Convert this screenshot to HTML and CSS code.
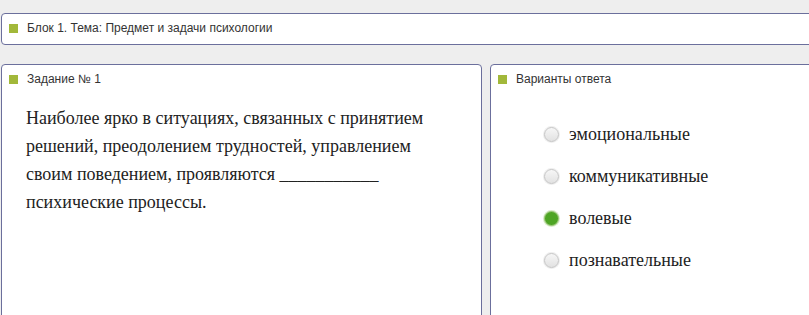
FILE: index.html
```html
<!DOCTYPE html>
<html lang="ru">
<head>
    <meta charset="UTF-8">
    <title>Тест</title>
    <link rel="stylesheet" href="styles.css">
</head>
<body>
<div class="page">
    <div class="box topic">
        <div class="box-title"><span class="marker"></span>Блок 1. Тема: Предмет и задачи психологии</div>
    </div>

    <div class="row">
        <div class="box task">
            <div class="box-title"><span class="marker"></span>Задание № 1</div>
            <p class="question">Наиболее ярко в ситуациях, связанных с принятием решений, преодолением трудностей, управлением своим поведением, проявляются ___________ психические процессы.</p>
        </div>

        <div class="box answers">
            <div class="box-title"><span class="marker"></span>Варианты ответа</div>
            <ul class="options">
                <li><span class="radio"></span>эмоциональные</li>
                <li><span class="radio"></span>коммуникативные</li>
                <li><span class="radio checked"></span>волевые</li>
                <li><span class="radio"></span>познавательные</li>
            </ul>
        </div>
    </div>
</div>
</body>
</html>
```

FILE: styles.css
```css
html, body {
    margin: 0;
    padding: 0;
    height: 100%;
    overflow: hidden;
}

body {
    background-color: #eeeeee;
    font-family: "Liberation Sans", Arial, sans-serif;
    color: #333;
}

.page {
    width: 860px;
    padding: 13px 0 0 1px;
}

.box {
    background-color: #fff;
    border: 1px solid #6b6f9c;
    border-radius: 4px;
    box-sizing: border-box;
}

.topic {
    height: 32px;
}

.box-title {
    display: flex;
    align-items: center;
    height: 28px;
    padding-left: 7px;
    font-size: 12px;
    color: #333;
}

.marker {
    display: inline-block;
    width: 9px;
    height: 9px;
    background-color: #a2b83a;
    margin-right: 9px;
}

.row {
    display: flex;
    gap: 8px;
    margin-top: 19px;
}

.task {
    width: 481px;
    height: 280px;
}

.answers {
    flex: 1;
    height: 280px;
}

.question {
    margin: 11px 40px 0 24px;
    font-family: "Liberation Serif", "Times New Roman", serif;
    font-size: 18px;
    line-height: 28px;
    color: #222;
}

.options {
    list-style: none;
    margin: 20px 0 0 0;
    padding: 0 0 0 53px;
    font-family: "Liberation Serif", "Times New Roman", serif;
    font-size: 18px;
    color: #222;
}

.options li {
    display: flex;
    align-items: center;
    height: 42px;
}

.radio {
    display: inline-block;
    width: 13px;
    height: 13px;
    border-radius: 50%;
    border: 1px solid #c4c4c4;
    background: linear-gradient(#f6f6f6, #e2e2e2);
    box-shadow: 0 0 0 1px #eeeeee;
    margin-right: 10px;
}

.radio.checked {
    border-color: #9cc77a;
    background: #4ea524;
    box-shadow: 0 0 0 1px #d8ebc8;
}
```
